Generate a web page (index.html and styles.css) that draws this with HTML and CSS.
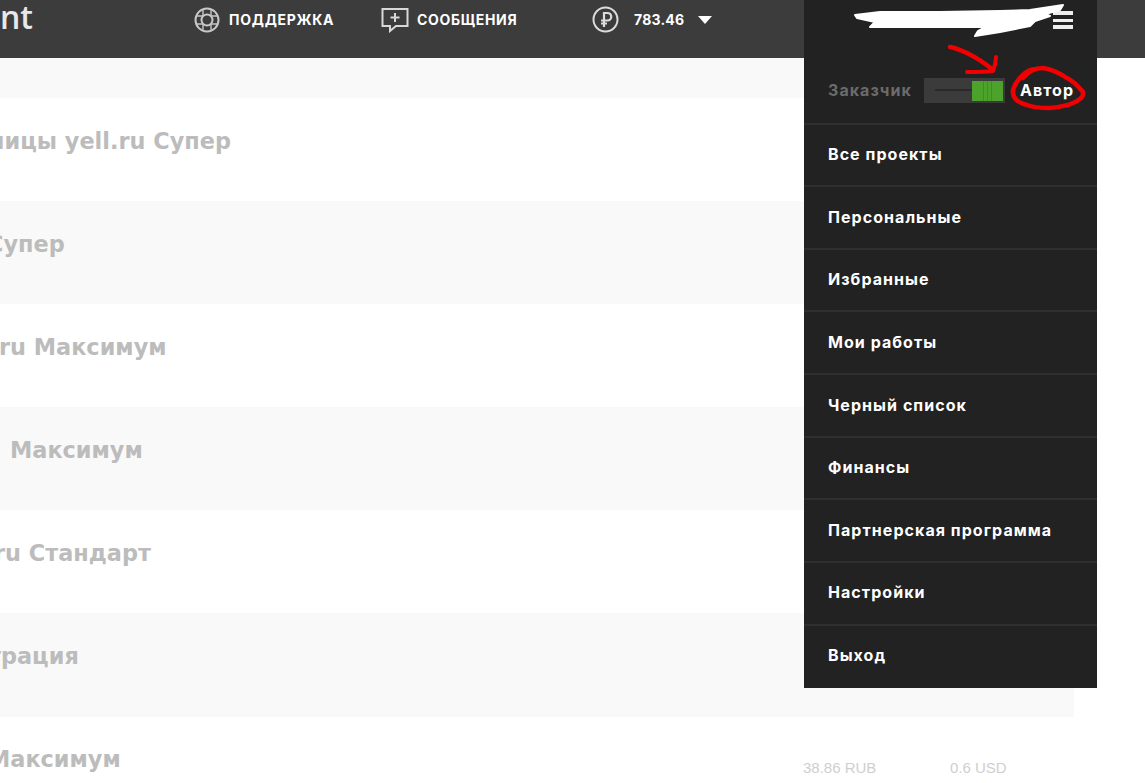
FILE: index.html

```html
<!DOCTYPE html>
<html lang="ru">
<head>
  <meta charset="UTF-8">
  <title>Проекты</title>
  <link rel="stylesheet" href="styles.css">
</head>
<body>

  <header class="topbar">
    <div class="logo">nt</div>
    <a class="top-link top-support">
      <svg class="top-icon" width="26" height="26" viewBox="0 0 26 26" fill="none" stroke="#c8c8c8" stroke-width="2">
        <circle cx="13" cy="13" r="11.500"/>
        <circle cx="13" cy="13" r="5.500"/>
        <path d="M9 3v6M17 3v6M9 23v-6M17 23v-6M3 9h6M3 17h6M23 9h-6M23 17h-6" stroke-width="1.400"/>
      </svg>
      ПОДДЕРЖКА
    </a>
    <a class="top-link top-messages">
      <svg class="top-icon" width="28" height="26" viewBox="0 0 28 26" fill="none" stroke="#d8d8d8" stroke-width="2">
        <path d="M1.500 2h25v17H15l-6 5v-5H1.500z"/>
        <path d="M14 6v9M9.500 10.500h9"/>
      </svg>
      СООБЩЕНИЯ
    </a>
    <div class="balance">
      <svg class="top-icon" width="27" height="27" viewBox="0 0 27 27" fill="none" stroke="#dcdcdc" stroke-width="2">
        <circle cx="13.500" cy="13.500" r="12"/>
        <path d="M12 21V7h3.500a3.500 3.500 0 0 1 0 7.500H9M9 17.500h6" stroke-width="2.200"/>
      </svg>
      <span class="balance-value">783.46</span>
      <span class="caret"></span>
    </div>
  </header>

  <main class="list">
    <div class="row row-first"></div>
    <div class="row row-white"><div class="row-title cut-11">ницы yell.ru Супер</div></div>
    <div class="row"><div class="row-title cut-13">Супер</div></div>
    <div class="row row-white"><div class="row-title cut-1">ru Максимум</div></div>
    <div class="row"><div class="row-title row-title-in">Максимум</div></div>
    <div class="row row-white"><div class="row-title cut-6">ru Стандарт</div></div>
    <div class="row row-tall"><div class="row-title cut-12">трация</div></div>
    <div class="row row-white row-last">
      <div class="row-title cut-12">Максимум</div>
      <div class="row-prices">
        <span class="price-rub">38.86 RUB</span>
        <span>0.6 USD</span>
      </div>
    </div>
  </main>

  <nav class="menu">
    <div class="menu-head">
      <span class="burger"></span>
    </div>
    <div class="role-switch">
      <span class="role-off">Заказчик</span>
      <span class="toggle">
        <span class="toggle-line"></span>
        <span class="toggle-knob"></span>
      </span>
      <span class="role-on">Автор</span>
    </div>
    <a class="menu-item">Все проекты</a>
    <a class="menu-item">Персональные</a>
    <a class="menu-item">Избранные</a>
    <a class="menu-item">Мои работы</a>
    <a class="menu-item">Черный список</a>
    <a class="menu-item">Финансы</a>
    <a class="menu-item">Партнерская программа</a>
    <a class="menu-item">Настройки</a>
    <a class="menu-item">Выход</a>
  </nav>

  <!-- пометки поверх скриншота -->
  <svg class="marks" width="1145" height="120" viewBox="0 0 1145 120" fill="none">
    <path d="M855 15 L880 12 L940 12 L1000 11 L1030 10 L1063 5 L1060 10 L1045 14 L1050 16 L1035 21 L1030 26 L1000 32 L975 36 L978 31 L985 27 L950 27 L900 27 L870 27 L875 22 L857 18 Z" fill="#fff" stroke="#fff" stroke-width="2" stroke-linejoin="round"/>
    <g stroke="#f00000" stroke-linecap="round" stroke-linejoin="round">
      <path d="M950 47 C956 48 962 51 967 53 C977 58 986 64 993 70" stroke-width="4.500"/>
      <path d="M996 57 C996 62 995 66 993 71 C985 72 976 72 967 72" stroke-width="4"/>
      <path d="M1036 69 C1026 69 1016 80 1013 90 C1012 98 1018 103 1027 105 C1035 108 1042 108 1050 108 C1060 107 1067 106 1073 103 C1080 100 1084 96 1083 92 C1078 86 1073 81 1067 78 C1058 72 1050 69 1043 68 C1035 68 1028 72 1023 78" stroke-width="4.500"/>
    </g>
  </svg>

</body>
</html>
```

FILE: styles.css

```css
* {
  box-sizing: border-box;
}

html, body {
  height: 100%;
}

body {
  margin: 0;
  position: relative;
  overflow: hidden;
  background-color: #fff;
  font-family: "Inter", "Liberation Sans", sans-serif;
}

.topbar {
  display: flex;
  align-items: center;
  height: 58px;
  background-color: #3c3c3c;
  color: #fff;
}

.logo {
  width: 194px;
  margin-top: -24px;
  font-family: "Open Sans", sans-serif;
  font-size: 32px;
  font-weight: 600;
  line-height: 40px;
  color: #e8e8e8;
}

.top-link,
.balance {
  display: flex;
  align-items: center;
  margin-top: -19px;
  font-size: 14px;
  font-weight: 700;
  letter-spacing: 0.7px;
}

.top-icon {
  flex: none;
}

.top-support {
  gap: 9px;
  width: 187px;
}

.top-messages {
  gap: 8px;
  width: 211px;
}

.balance-value {
  margin-left: 15px;
  letter-spacing: 0.2px;
}

.caret {
  margin-left: 14px;
  border-left: 7.500px solid transparent;
  border-right: 7.500px solid transparent;
  border-top: 8px solid #fff;
}

.list {
  width: 1074px;
  overflow: hidden;
}

.row {
  height: 103px;
  padding-top: 26px;
  background-color: #f9f9f9;
}

.row-first {
  height: 40px;
  padding: 0;
}

.row-tall {
  height: 104px;
}

.row-white {
  background-color: #fff;
}

.row-last {
  display: flex;
  justify-content: space-between;
  padding-top: 25px;
}

.row-title {
  font-family: "DejaVu Sans", sans-serif;
  font-size: 22.400px;
  font-weight: 700;
  line-height: 34px;
  white-space: nowrap;
  color: #bcbcbc;
}

/* начало названия уходит за левый край */
.cut-1 {
  margin-left: -1px;
}

.cut-6 {
  margin-left: -6px;
}

.cut-11 {
  margin-left: -11px;
}

.cut-12 {
  margin-left: -12px;
}

.cut-13 {
  margin-left: -13px;
}

.row-title-in {
  padding-left: 10px;
}

.row-prices {
  display: flex;
  width: 271px;
  padding-top: 18px;
  font-family: "Liberation Sans", sans-serif;
  font-size: 15px;
  line-height: 16px;
  color: #cfcfcf;
}

.price-rub {
  width: 147px;
}

.menu {
  position: absolute;
  top: 0;
  left: 804px;
  width: 293px;
  height: 688px;
  background-color: #222;
  color: #fff;
}

.menu-head {
  display: flex;
  justify-content: flex-end;
  height: 58px;
  padding: 11px 24px 0 0;
}

.burger {
  width: 20px;
  height: 18px;
  border-top: 4px solid #eee;
  border-bottom: 4px solid #eee;
  background: linear-gradient(#eee, #eee) center / 100% 3px no-repeat;
}

.role-switch {
  display: flex;
  align-items: center;
  height: 64.500px;
  padding-left: 24px;
  font-size: 16px;
  font-weight: 700;
  letter-spacing: 1.050px;
}

.role-off {
  width: 96px;
  color: #6b6b6b;
}

.toggle {
  position: relative;
  display: flex;
  align-items: center;
  width: 81px;
  height: 25px;
  background-color: #3b3b3b;
}

.toggle-line {
  width: 37px;
  height: 2px;
  margin-left: 11px;
  background-color: #2a2a2a;
}

.toggle-knob {
  position: absolute;
  top: 3px;
  right: 2px;
  width: 31px;
  height: 20px;
  background: repeating-linear-gradient(90deg, #438a29 0, #438a29 1px, #4da22b 1px, #4da22b 4px) center / 9px 100% no-repeat, #4da22b;
}

.role-on {
  margin-left: 15px;
}

.menu-item {
  display: block;
  height: 62.650px;
  padding: 19.500px 24px 0;
  border-top: 2px solid #2f2f2f;
  font-size: 16px;
  font-weight: 700;
  line-height: 20px;
  letter-spacing: 1.050px;
}

.marks {
  position: absolute;
  top: 0;
  left: 0;
  pointer-events: none;
}
```
